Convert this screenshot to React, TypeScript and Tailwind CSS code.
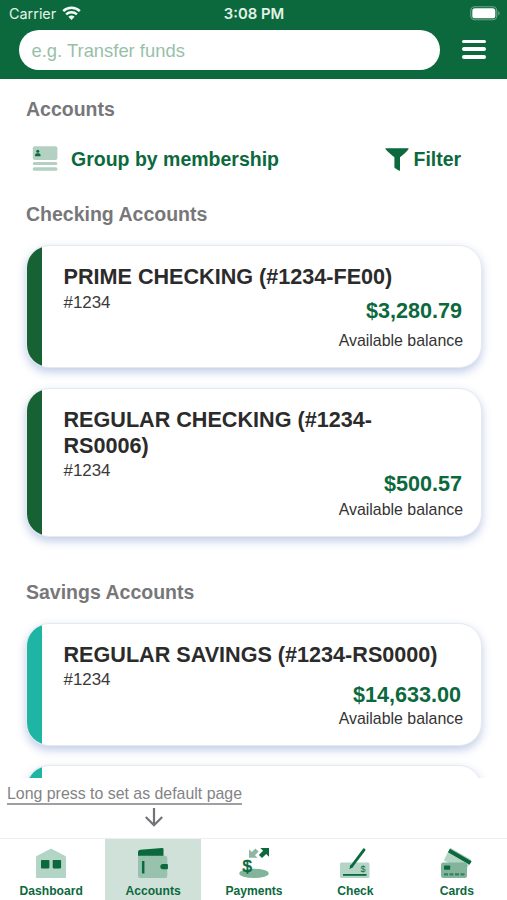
import type { ReactNode } from 'react'

interface Account {
  name: string
  member: string
  balance: string
  height: string
  bar: string
  memberClass?: string
  balanceClass?: string
}

const checking: Account[] = [
  {
    name: 'PRIME CHECKING (#1234-FE00)',
    member: '#1234',
    balance: '$3,280.79',
    height: 'h-[123px]',
    bar: 'bg-[#176235]',
    memberClass: 'mt-px',
    balanceClass: 'mb-[8px]',
  },
  {
    name: 'REGULAR CHECKING (#1234-RS0006)',
    member: '#1234',
    balance: '$500.57',
    height: 'h-[149px]',
    bar: 'bg-[#176235]',
    balanceClass: 'mb-[4px]',
  },
]

const savings: Account[] = [
  {
    name: 'REGULAR SAVINGS (#1234-RS0000)',
    member: '#1234',
    balance: '$14,633.00',
    height: 'h-[123px]',
    bar: 'bg-[#1eb5a5]',
    balanceClass: 'mr-[1px] mb-[2px]',
  },
  {
    name: '',
    member: '',
    balance: '',
    height: 'h-[123px]',
    bar: 'bg-[#1eb5a5]',
  },
]

function AccountCard({ account }: { account: Account }) {
  return (
    <div
      className={`flex w-[456px] shrink-0 overflow-hidden rounded-[23px] border border-[#e6e9ee] bg-white shadow-[0_4px_10px_rgba(60,95,180,0.32)] ${account.height}`}
    >
      <div className={`w-[14.5px] shrink-0 ${account.bar}`} />
      <div className="flex flex-1 flex-col pt-[18px] pr-[18px] pb-[15px] pl-[22px]">
        <h3 className="w-[380px] text-[21.6px] leading-[26px] font-bold text-[#2b2b2b]">{account.name}</h3>
        <p className={`text-[16.9px] leading-[23px] text-[#3a3a3a] ${account.memberClass ?? ''}`}>{account.member}</p>
        {account.balance && (
          <div className="mt-auto -translate-y-px text-right">
            <p className={`-mt-8 pr-[1px] text-[21.6px] leading-[23px] font-bold text-[#0b693d] ${account.balanceClass ?? ''}`}>
              {account.balance}
            </p>
            <p className="text-[15.9px] leading-[21px] text-[#333333]">Available balance</p>
          </div>
        )}
      </div>
    </div>
  )
}

function WifiIcon() {
  return (
    <svg width="19" height="15" viewBox="0 0 19 15" fill="none" stroke="#f4fbf6">
      <path d="M1.2 5.2C5.8.7 13.2.7 17.8 5.2" strokeWidth="2.5" />
      <path d="M4.1 8.4c3-2.9 7.8-2.9 10.8 0" strokeWidth="2.3" />
      <path d="M6.4 10.7c1.8-1.6 4.4-1.6 6.2 0L9.5 14z" fill="#f4fbf6" stroke="none" />
    </svg>
  )
}

function BatteryIcon() {
  return (
    <svg width="31" height="15" viewBox="0 0 31 15" fill="none">
      <rect x=".8" y=".8" width="26" height="13" rx="4" stroke="#6fa588" strokeWidth="1.1" />
      <rect x="2.3" y="2.3" width="23" height="10" rx="2.6" fill="#fff" />
      <path d="M28.3 5v4.6c1.8-.8 1.8-3.8 0-4.6z" fill="#6fa588" />
    </svg>
  )
}

function MembershipIcon() {
  return (
    <svg width="26" height="26" viewBox="0 0 26 26">
      <rect x=".8" y=".3" width="24.6" height="13.8" rx="2" fill="#b3d1c3" />
      <circle cx="5.8" cy="5.2" r="1.5" fill="#0b693d" />
      <path d="M3.1 10.2V9c0-1 .9-1.8 1.8-1.8h1.8c.9 0 1.8.8 1.8 1.8v1.2z" fill="#0b693d" />
      <rect x=".8" y="15.9" width="24.6" height="3.2" rx="1.5" fill="#b3d1c3" />
      <rect x=".8" y="21.2" width="24.6" height="3.6" rx="1.5" fill="#b3d1c3" />
    </svg>
  )
}

function FilterIcon() {
  return (
    <svg width="24" height="24" viewBox="0 0 24 24" fill="#0b693d">
      <path d="M.8 1.3h22.4c.4 0 .5.4.2.9-1.8 2.5-5.1 5.2-8.4 8v12.700c0 .8-.6 1.100-1.200.7l-3.700-2.300c-.5-.3-.7-.7-.7-1.300V10.200C6.100 7.400 2.800 4.700.6 2.200.3 1.700.4 1.300.8 1.300z" />
    </svg>
  )
}

function DashboardIcon() {
  return (
    <svg width="34" height="34" viewBox="0 0 34 34">
      <path d="M17 2.6 31.3 10c.5.3.7.6.7 1.2V31c0 .6-.3 1-1 1H3c-.7 0-1-.4-1-1V11.2c0-.6.2-.9.7-1.2z" fill="#b3d5c5" />
      <rect x="7" y="14" width="8.4" height="8.4" rx=".8" fill="#0b693d" />
      <rect x="18.7" y="14" width="8.4" height="8.4" rx=".8" fill="#0b693d" />
    </svg>
  )
}

function WalletIcon() {
  return (
    <svg width="34" height="34" viewBox="0 0 34 34">
      <path d="M4.5 3.800 26 1.900c.9-.1 1.5.4 1.5 1.300v7H2V6.400c0-1.500.9-2.500 2.500-2.600z" fill="#0b693d" />
      <path d="M2 9.8h27c1.4 0 2.3.9 2.3 2.3v17.6c0 1.4-.9 2.3-2.3 2.3H4c-1.300 0-2-.9-2-2.200z" fill="#98c1ae" />
      <path d="M7.2 15v12.5" stroke="#0b693d" strokeWidth="2.5" />
      <path d="M27 17.9h4c.6 0 .9.3.9.9v3.5c0 .6-.3.9-.9.9h-4c-3.6 0-3.6-5.3 0-5.3z" fill="#0b693d" />
    </svg>
  )
}

function PaymentsIcon() {
  return (
    <svg width="34" height="34" viewBox="0 0 34 34">
      <ellipse cx="17" cy="27.4" rx="14.7" ry="4.7" fill="#82b49c" />
      <text x="5.4" y="25.8" fontSize="17" fill="#0b693d" stroke="#0b693d" strokeWidth=".6" fontFamily="Liberation Sans">$</text>
      <path d="M12 3.2v8.6h8.600l-2.600-2.600 3.600-3.600-3.200-3.200L14.800 6z" fill="#8fb8a4" />
      <path d="M23.3 2h8.700v8.700l-2.800-2.800-4.200 4.200-3.100-3.100L26.100 4.800z" fill="#0b693d" />
    </svg>
  )
}

function CheckIcon() {
  return (
    <svg width="34" height="34" viewBox="0 0 34 34">
      <rect x="2" y="16.5" width="29.5" height="15.5" rx="1.5" fill="#b3d5c5" />
      <path d="M5 28.9h23.5" stroke="#0b693d" strokeWidth="1.8" />
      <text x="22.6" y="25.7" fontSize="9" fill="#0b693d" fontFamily="Liberation Sans">$</text>
      <path d="M26 3.8 13.5 20.5" stroke="#0b693d" strokeWidth="2.9" strokeLinecap="round" />
      <path d="M12.4 18.8 11.400 23.300l4-2.600z" fill="#0b693d" />
    </svg>
  )
}

function CardsIcon() {
  return (
    <svg width="34" height="34" viewBox="0 0 34 34">
      <path d="M12.2 2.200 31.300 13.200c.9.500 1 1.200.6 2l-5 9L4.800 14.500l5.600-11.400c.4-.9 1-1.300 1.800-.9z" fill="#b3d5c5" />
      <path d="M10 4.600 31.600 17.100" stroke="#0b693d" strokeWidth="4" />
      <rect x="2" y="16.5" width="26" height="15.5" rx="2.2" fill="#82b49c" />
      <rect x="5" y="19.5" width="6.2" height="4.2" rx=".8" fill="#0b693d" />
      <path d="M5 28.3h20.5" stroke="#35805c" strokeWidth="2.3" strokeDasharray="4 1.5" />
    </svg>
  )
}

function Tab({ label, active, children }: { label: string; active?: boolean; children: ReactNode }) {
  return (
    <div className="flex flex-1 justify-center">
      <div className={`flex w-24 flex-col items-center pt-[7px] ${active ? 'ml-[1px] bg-[#d0e1d9]' : ''}`}>
        {children}
        <span className="mt-[3px] pl-px text-[12.1px] leading-[17px] font-bold text-[#0b693d]">{label}</span>
      </div>
    </div>
  )
}

export default function App() {
  return (
    <div className="flex h-[900px] w-[507px] flex-col overflow-hidden bg-white font-['Liberation_Sans',Arial,sans-serif]">
      <header className="h-[79px] shrink-0 bg-[#0c693d]">
        {/* Status bar */}
        <div className="flex h-[30px] items-center pr-[6px] pb-[3px] pl-[9px] font-['Inter',sans-serif] text-[14.4px] text-[#e3f3e9]">
          <div className="flex flex-1 items-center gap-[6px]">
            <span>Carrier</span>
            <WifiIcon />
          </div>
          <span className="pt-[2px] pr-[2px] text-[14.8px] font-semibold">3:08 PM</span>
          <div className="flex flex-1 justify-end">
            <BatteryIcon />
          </div>
        </div>
        {/* Search */}
        <div className="flex items-center">
          <div className="ml-[19px] flex h-[39.5px] w-[421px] items-center rounded-full bg-white pt-[2px] pl-[12.5px] text-[18.4px] text-[#98bfaa]">
            <span>e.g. Transfer funds</span>
          </div>
          <div className="mb-px ml-[22px] flex flex-col gap-[4px]">
            <div className="h-[3.8px] w-6 rounded-full bg-white" />
            <div className="h-[3.8px] w-6 rounded-full bg-white" />
            <div className="h-[3.8px] w-6 rounded-full bg-white" />
          </div>
        </div>
      </header>

      {/* Account list */}
      <main className="flex h-[699px] shrink-0 flex-col overflow-hidden pt-[17px] pl-[26px]">
        <h1 className="text-[19.5px] leading-[26px] font-bold text-[#77777a]">Accounts</h1>
        <div className="mt-[24px] flex h-[26px] items-center text-[19.5px] font-bold text-[#0b693d]">
          <div className="ml-[6px] flex items-center gap-[13px]">
            <MembershipIcon />
            <span className="pt-[2px]">Group by membership</span>
          </div>
          <div className="mr-[46px] ml-auto flex items-center gap-[5px]">
            <FilterIcon />
            <span className="pt-[2px] text-[19.4px]">Filter</span>
          </div>
        </div>
        <h2 className="mt-[29px] text-[19.5px] leading-[26px] font-bold text-[#77777a]">Checking Accounts</h2>
        <div className="mt-[18px] flex flex-col gap-[20px]">
          {checking.map((account) => (
            <AccountCard key={account.name} account={account} />
          ))}
        </div>
        <h2 className="mt-[42px] text-[19.5px] leading-[26px] font-bold text-[#77777a]">Savings Accounts</h2>
        <div className="mt-[18px] flex flex-col gap-[19px]">
          {savings.map((account) => (
            <AccountCard key={account.name} account={account} />
          ))}
        </div>
      </main>

      {/* Default page hint */}
      <div className="h-[60px] shrink-0 pt-[7px] pl-[7px]">
        <div className="w-[235px] border-b-2 border-[#a0a0a3] text-[15.9px] leading-[18px] whitespace-nowrap text-[#838386]">
          Long press to set as default page
        </div>
        <svg className="ml-[137px] mt-[2px]" width="20" height="22" viewBox="0 0 20 22" fill="none" stroke="#747478" strokeWidth="2.2">
          <path d="M10 1v17M1.8 10 10 18.2l8.2-8.2" />
        </svg>
      </div>

      <nav className="flex h-[62px] shrink-0 border-t border-[#eeeeee]">
        <Tab label="Dashboard">
          <DashboardIcon />
        </Tab>
        <Tab label="Accounts" active>
          <WalletIcon />
        </Tab>
        <Tab label="Payments">
          <PaymentsIcon />
        </Tab>
        <Tab label="Check">
          <CheckIcon />
        </Tab>
        <Tab label="Cards">
          <CardsIcon />
        </Tab>
      </nav>
    </div>
  )
}
